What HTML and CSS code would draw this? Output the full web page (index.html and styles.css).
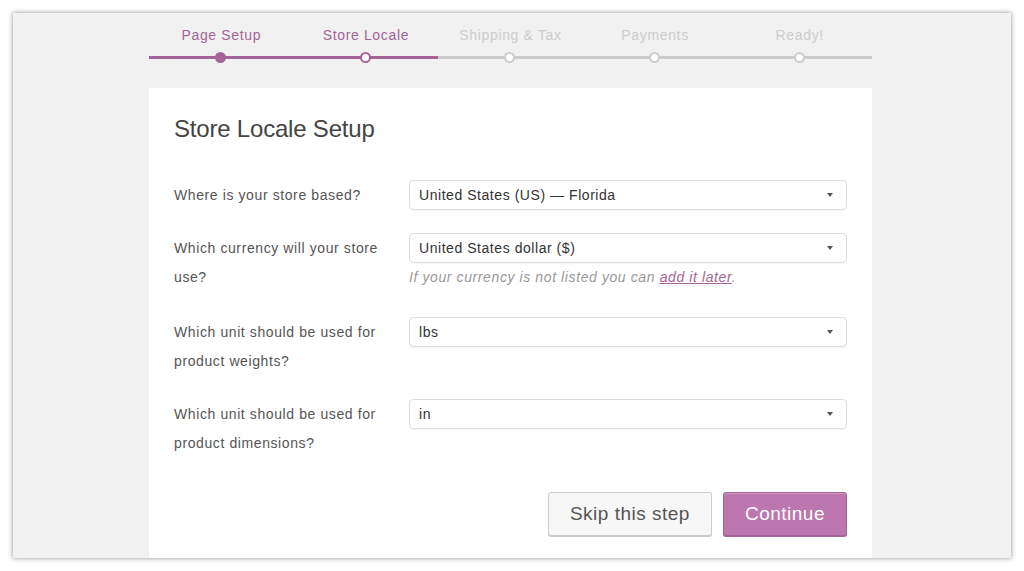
FILE: index.html
```html
<!DOCTYPE html>
<html lang="en">

<head>
  <meta charset="UTF-8" />
  <title>Store Locale Setup</title>
  <link rel="stylesheet" href="styles.css">
</head>

<body>
  <div class="frame">
    <ol class="steps">
      <li class="done">
        <span class="step-label">Page Setup</span>
        <span class="track"><span class="dot"></span></span>
      </li>
      <li class="active">
        <span class="step-label">Store Locale</span>
        <span class="track"><span class="dot"></span></span>
      </li>
      <li>
        <span class="step-label">Shipping &amp; Tax</span>
        <span class="track"><span class="dot"></span></span>
      </li>
      <li>
        <span class="step-label">Payments</span>
        <span class="track"><span class="dot"></span></span>
      </li>
      <li>
        <span class="step-label">Ready!</span>
        <span class="track"><span class="dot"></span></span>
      </li>
    </ol>

    <div class="setup-card">
      <h1>Store Locale Setup</h1>

      <div class="form-row">
        <label class="field-label">Where is your store based?</label>
        <div class="field">
          <div class="select"><span>United States (US) — Florida</span><span class="caret"></span></div>
        </div>
      </div>

      <div class="form-row">
        <label class="field-label">Which currency will your store use?</label>
        <div class="field">
          <div class="select"><span>United States dollar ($)</span><span class="caret"></span></div>
          <p class="description">If your currency is not listed you can <a href="#">add it later</a>.</p>
        </div>
      </div>

      <div class="form-row">
        <label class="field-label">Which unit should be used for product weights?</label>
        <div class="field">
          <div class="select"><span>lbs</span><span class="caret"></span></div>
        </div>
      </div>

      <div class="form-row">
        <label class="field-label">Which unit should be used for product dimensions?</label>
        <div class="field">
          <div class="select"><span>in</span><span class="caret"></span></div>
        </div>
      </div>

      <div class="actions">
        <button class="button">Skip this step</button>
        <button class="button button-primary">Continue</button>
      </div>
    </div>
  </div>
</body>

</html>
```

FILE: styles.css
```css
body {
  margin: 0;
  background: #fff;
  font-family: "Liberation Sans", Arial, sans-serif;
  color: #555;
}

.frame {
  margin: 13px;
  height: 545px;
  background: #f1f1f1;
  box-shadow: 0 0 5px rgba(0, 0, 0, 0.45);
  overflow: hidden;
}

/* progress steps */
.steps {
  list-style: none;
  margin: 0 0 0 136px;
  padding: 12px 0 0;
  width: 723px;
  display: grid;
  grid-template-columns: repeat(5, 1fr);
}

.steps li {
  display: flex;
  flex-direction: column;
  align-items: center;
}

.step-label {
  font-size: 14px;
  line-height: 20px;
  letter-spacing: 0.65px;
  color: #ccc;
  margin-bottom: 11px;
}

.track {
  position: relative;
  display: block;
  width: 100%;
  height: 3px;
  background: #ccc;
}

.dot {
  position: absolute;
  left: 50%;
  top: 50%;
  width: 7px;
  height: 7px;
  margin: -6px 0 0 -6px;
  border: 2.5px solid #ccc;
  border-radius: 50%;
  background: #fff;
}

.steps .done .step-label,
.steps .active .step-label {
  color: #a46497;
}

.steps .done .track,
.steps .active .track {
  background: #a46497;
}

.steps .done .dot {
  background: #a46497;
  border-color: #a46497;
}

.steps .active .dot {
  border-color: #a46497;
}

/* card */
.setup-card {
  margin: 29px 0 0 136px;
  width: 673px;
  padding: 26px 25px 40px 25px;
  background: #fff;
}

.setup-card h1 {
  margin: 0 0 36px;
  font-size: 24px;
  line-height: 30px;
  font-weight: normal;
  letter-spacing: -0.2px;
  color: #444;
}

.form-row {
  display: grid;
  grid-template-columns: 235px 1fr;
  margin-bottom: 23px;
}

.form-row:nth-child(3) {
  margin-bottom: 25px;
}

.field-label {
  font-size: 14px;
  line-height: 29px;
  letter-spacing: 0.6px;
  color: #555;
  padding-right: 10px;
  margin-top: 1px;
}

.select {
  display: flex;
  align-items: center;
  justify-content: space-between;
  height: 28px;
  padding: 0 13px 0 9px;
  border: 1px solid #ddd;
  border-radius: 4px;
  box-shadow: 0 1px 1px rgba(0, 0, 0, 0.04);
  font-size: 14px;
  letter-spacing: 0.55px;
  color: #333;
}

.caret {
  width: 0;
  height: 0;
  border-left: 3.5px solid transparent;
  border-right: 3.5px solid transparent;
  border-top: 4px solid #555;
}

.description {
  margin: 0;
  font-size: 14px;
  line-height: 29px;
  letter-spacing: 0.6px;
  font-style: italic;
  color: #999;
}

.description a {
  color: #a46497;
  text-decoration: underline;
}

.actions {
  display: flex;
  justify-content: flex-end;
  gap: 11px;
  margin-top: 34px;
}

.button {
  height: 44px;
  padding: 0 21px;
  font-family: inherit;
  font-size: 19px;
  letter-spacing: 0.5px;
  border-radius: 3px;
  border: 1px solid #ccc;
  background: #f7f7f7;
  color: #555;
  box-shadow: 0 1px 0 #ccc;
}

.button-primary {
  background: #bb77ae;
  border-color: #a36597;
  color: #fff;
  box-shadow: inset 0 1px 0 rgba(255, 255, 255, 0.25), 0 1px 0 #a36597;
}
```
